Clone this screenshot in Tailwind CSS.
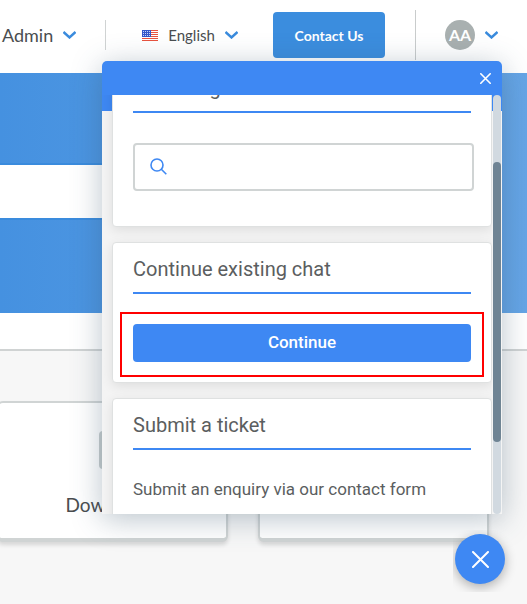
<!DOCTYPE html>
<html lang="en">
<head>
<meta charset="utf-8">
<meta name="viewport" content="width=device-width, initial-scale=1">
<title>Support portal</title>
<script src="https://cdn.jsdelivr.net/npm/@tailwindcss/browser@4"></script>
</head>
<body class="bg-[#f7f7f7] font-['Lato',sans-serif] text-[#4a4d50]">
<div class="relative flex min-h-screen flex-col overflow-hidden">

  <header class="flex h-[73px] shrink-0 items-start bg-white">
    <button type="button" class="flex h-[70px] items-center gap-2.5 pl-0.5 text-[18px]">Admin
      <svg class="h-2 w-[13px]" viewBox="0 0 13 8" fill="none" stroke="#3a8bdd" stroke-width="2.400"><path d="M.5 1l6 5.500L12.500 1"/></svg>
    </button>
    <div class="mt-5 ml-[29px] h-[30px] w-px bg-[#d0d3d3]"></div>
    <button type="button" class="ml-9 flex h-[70px] items-center gap-2.5 text-[15px]">
      <svg class="h-[11px] w-4" viewBox="0 0 16 11"><rect width="16" height="11" fill="#fff"/><path d="M0 .5h16M0 2.500h16M0 4.500h16M0 6.500h16M0 8.500h16M0 10.500h16" stroke="#e8523f"/><rect width="9" height="7" fill="#3558c9"/><path d="M1 1.500h8M1 3.500h8M1 5.500h8" stroke="#c6d4fa" stroke-dasharray="1 1"/></svg>
      <span>English</span>
      <svg class="h-2 w-[13px]" viewBox="0 0 13 8" fill="none" stroke="#3a8bdd" stroke-width="2.400"><path d="M.5 1l6 5.500L12.500 1"/></svg>
    </button>
    <button type="button" class="mt-3 ml-auto h-[46px] w-28 rounded bg-[#3b8dde] text-[14px] font-bold text-white">Contact Us</button>
    <div class="mt-2.5 ml-[30px] h-[50px] w-px bg-[#c9cccc]"></div>
    <button type="button" aria-label="Account" class="mr-[29px] ml-[29px] flex h-[70px] items-center gap-2.5">
      <span class="flex size-[30px] items-center justify-center rounded-full bg-[#a9b0b0] text-[16px] font-bold text-white">AA</span>
      <svg class="h-2 w-[13px]" viewBox="0 0 13 8" fill="none" stroke="#3a8bdd" stroke-width="2.400"><path d="M.5 1l6 5.500L12.500 1"/></svg>
    </button>
  </header>

  <section class="h-60 shrink-0 bg-linear-to-r from-[#4591e0] to-[#65a5e6] pt-[90px]">
    <input type="search" aria-label="Search the portal" class="block h-[57px] w-4/5 border-y-2 border-[#3a8bdd] bg-white px-4 outline-none">
  </section>
  <div class="h-[38px] shrink-0 border-b-2 border-[#d0d3d3] bg-white"></div>

  <main class="-ml-[3px] flex gap-[30px] pt-[50px] pr-[38px]">
    <a href="#downloads" class="flex h-[141px] flex-1 flex-col items-center rounded-md border-2 border-b-4 border-[#d0d4d4] bg-white pt-7 shadow-[0_3px_4px_#00000022]">
      <span class="h-[38px] w-7 rounded bg-[#c7cdcd]"></span>
      <span class="mt-[22px] text-[19px]">Downloads</span>
    </a>
    <a href="#more" aria-label="More" class="h-[141px] flex-1 rounded-md border-2 border-b-4 border-[#d0d4d4] bg-white shadow-[0_3px_4px_#00000022]"></a>
  </main>

  <aside aria-label="Help" class="absolute top-[61px] right-[25px] left-[102px] flex h-[453px] flex-col rounded-t-[5px] bg-[#f4f4f4] font-['Roboto',sans-serif] text-[#5b5e60] shadow-[0_5px_30px_#36526959]">
    <div class="flex h-[34px] shrink-0 items-center justify-end rounded-t-[5px] bg-[#3e88f3] pr-[11px]">
      <button type="button" aria-label="Close" class="size-[11px]">
        <svg class="size-[11px]" viewBox="0 0 11 11" fill="none" stroke="#fff" stroke-width="1.600" stroke-linecap="round"><path d="M.8.8l9.400 9.400M10.200.8L.8 10.200"/></svg>
      </button>
    </div>
    <div class="flex min-h-0 flex-1 bg-linear-to-b from-[#3e88f3] from-[16px] to-[#f4f4f4] to-[16px]">
      <div class="min-w-0 flex-1 overflow-hidden pl-2.5">
        <div class="-mt-[34px] flex flex-col gap-[15px]">
          <section class="rounded border border-[#dfe1e1] bg-white px-5 pb-[35px] shadow-[0_3px_12px_#00000018]">
            <h2 class="flex h-[51px] items-center border-b-2 border-[#3e88f3] pt-0.5 text-[20px]">Knowledge base</h2>
            <label class="mt-[30px] -mr-[3px] flex h-12 items-center gap-3 rounded border-2 border-[#d0d4d4] px-[15px] pb-0.5">
              <svg class="size-[17px] shrink-0" viewBox="0 0 17 17" fill="none" stroke="#3e88f3" stroke-width="1.600"><circle cx="7" cy="7" r="6"/><path d="M11.300 11.300l5 5"/></svg>
              <input type="text" aria-label="Search help" class="min-w-0 flex-1 text-[17px] outline-none">
            </label>
          </section>
          <section class="relative rounded border border-[#dfe1e1] bg-white px-5 pb-5 shadow-[0_3px_12px_#00000018]">
            <h2 class="flex h-[51px] items-center border-b-2 border-[#3e88f3] pt-0.5 text-[20px]">Continue existing chat</h2>
            <button type="button" class="mt-[30px] block h-[38px] w-full rounded bg-[#3e88f3] text-[17px] font-medium text-white">Continue</button>
            <div class="pointer-events-none absolute inset-x-[7px] top-[69px] bottom-[5px] border-2 border-[#f00]"></div>
          </section>
          <section class="rounded border border-[#dfe1e1] bg-white px-5 pb-9 shadow-[0_3px_12px_#00000018]">
            <h2 class="flex h-[51px] items-center border-b-2 border-[#3e88f3] pt-0.5 text-[20px]">Submit a ticket</h2>
            <p class="mt-[27px] text-[17px] leading-6">Submit an enquiry via our contact form</p>
          </section>
        </div>
      </div>
      <div class="mr-px ml-px w-2 shrink-0 rounded-full bg-[#d1d9e0] pt-[67px]">
        <div class="h-[280px] rounded-full bg-[#6f8494]"></div>
      </div>
    </div>
  </aside>

  <div class="absolute top-[530px] right-0 overflow-hidden pt-1 pr-[22px] pb-2 pl-0.5">
    <button type="button" aria-label="Close help" class="flex size-[50px] items-center justify-center rounded-full bg-[#3e88f3] shadow-[0_3px_12px_#00000050]">
      <svg class="size-[17px]" viewBox="0 0 17 17" fill="none" stroke="#fff" stroke-width="2" stroke-linecap="round"><path d="M1 1l15 15M16 1L1 16"/></svg>
    </button>
  </div>
</div>
</body>
</html>
